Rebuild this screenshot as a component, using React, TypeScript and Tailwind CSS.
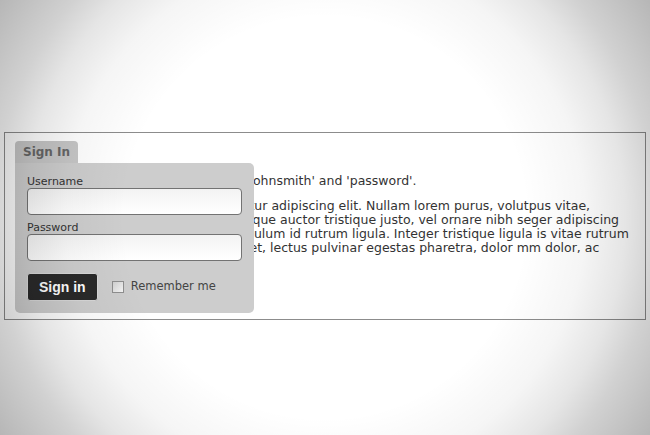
import React from 'react';

const body = { fontFamily: '"DejaVu Sans", Verdana, sans-serif' };

const App: React.FC = () => {
  return (
    <div className="relative w-[650px] h-[435px] overflow-hidden bg-white" style={body}>
      {/* content box */}
      <div className="relative mt-[132px] ml-[4px] w-[642px] h-[188px] border border-[#8c8c8c]">
        <div className="pl-[241px] pt-[41px] text-[12.5px] leading-[14px] text-[#333] whitespace-nowrap">
          <p>j'ohnsmith' and 'password'.</p>
          <div className="mt-[11px]">
            <p>itur adipiscing elit. Nullam lorem purus, volutpus vitae,</p>
            <p>sque auctor tristique justo, vel ornare nibh seger adipiscing</p>
            <p>bulum id rutrum ligula. Integer tristique ligula is vitae rutrum</p>
            <p>iet, lectus pulvinar egestas pharetra, dolor mm dolor, ac</p>
          </div>
        </div>

        {/* sign in dropdown */}
        <div className="absolute left-[10px] top-[8px] w-[239px]">
          <div className="w-[63px] h-[22px] rounded-t-[4px] bg-[#c6c6c6] pl-[8px] pt-[4px] text-[12px] leading-[14px] font-bold text-[#666]">
            Sign In
          </div>
          <div className="bg-[#cdcdcd] rounded-b-[5px] rounded-tr-[5px] px-[12px] pt-[12px] pb-[12px]">
            <label className="block text-[11px] leading-[13px] text-[#333]">Username</label>
            <div className="h-[27px] rounded-[4px] border border-[#737373] bg-gradient-to-b from-[#f3f3f3] to-white" />
            <label className="block mt-[6px] text-[11px] leading-[13px] text-[#333]">Password</label>
            <div className="h-[27px] rounded-[4px] border border-[#737373] bg-gradient-to-b from-[#f3f3f3] to-white" />
            <div className="mt-[12px] flex items-center">
              <button
                className="h-[28px] px-[11px] rounded-[3px] border border-[#d8d8d8] bg-[#2a2a2a] text-white text-[14px] font-bold"
                style={{ fontFamily: '"Liberation Sans", Arial, sans-serif' }}
              >
                Sign in
              </button>
              <span className="ml-[14px] w-[12px] h-[12px] border border-[#8e8e8e] bg-gradient-to-br from-[#d0d0d0] to-[#f4f4f4]" />
              <span className="ml-[7px] text-[11.5px] text-[#444]">Remember me</span>
            </div>
          </div>
        </div>
      </div>

      {/* vignette */}
      <div className="pointer-events-none absolute inset-0 bg-[radial-gradient(circle_400px_at_50%_50%,rgba(0,0,0,0)_50%,rgba(0,0,0,0.04)_65%,rgba(0,0,0,0.1)_75%,rgba(0,0,0,0.18)_83%,rgba(0,0,0,0.3)_100%)]" />
    </div>
  );
};

export default App;
